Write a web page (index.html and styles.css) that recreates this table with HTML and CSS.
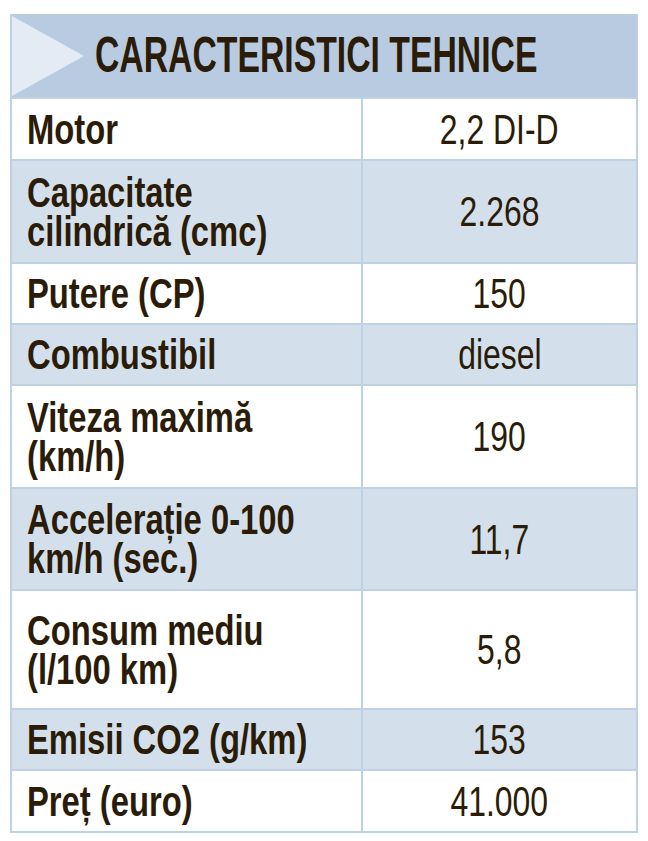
FILE: index.html
```html
<!DOCTYPE html>
<html lang="ro">
<head>
<meta charset="utf-8">
<title>Caracteristici tehnice</title>
<link rel="stylesheet" href="styles.css">
</head>
<body>
<div class="specs">
  <div class="head">
    <svg class="arrow" width="72" height="83" viewBox="0 0 72 83"><polygon points="0,2 72,42 0,82" fill="#e3ebf5"/></svg>
    <span class="head-text">CARACTERISTICI TEHNICE</span>
  </div>

  <div class="cell label"><span class="lt">Motor</span></div>
  <div class="cell value"><span class="vt">2,2 DI-D</span></div>

  <div class="cell label alt"><span class="lt">Capacitate<br>cilindrică (cmc)</span></div>
  <div class="cell value alt"><span class="vt">2.268</span></div>

  <div class="cell label"><span class="lt">Putere (CP)</span></div>
  <div class="cell value"><span class="vt">150</span></div>

  <div class="cell label alt"><span class="lt">Combustibil</span></div>
  <div class="cell value alt"><span class="vt">diesel</span></div>

  <div class="cell label"><span class="lt">Viteza maximă<br>(km/h)</span></div>
  <div class="cell value"><span class="vt">190</span></div>

  <div class="cell label alt"><span class="lt">Accelerație 0-100<br>km/h (sec.)</span></div>
  <div class="cell value alt"><span class="vt">11,7</span></div>

  <div class="cell label"><span class="lt">Consum mediu<br>(l/100 km)</span></div>
  <div class="cell value"><span class="vt">5,8</span></div>

  <div class="cell label alt"><span class="lt">Emisii CO2 (g/km)</span></div>
  <div class="cell value alt"><span class="vt">153</span></div>

  <div class="cell label"><span class="lt">Preț (euro)</span></div>
  <div class="cell value"><span class="vt">41.000</span></div>
</div>
</body>
</html>
```
FILE: styles.css
```css
html, body {
  margin: 0;
  padding: 0;
  background: #ffffff;
}

body {
  font-family: "Liberation Sans", Arial, sans-serif;
  color: #2a1c08;
}

.specs {
  margin: 14px 0 0 10px;
  width: 628px;
  box-sizing: border-box;
  padding: 0 2px 2px 2px;
  background: #bfd1e4;
  display: grid;
  grid-template-columns: 349px 1fr;
  grid-template-rows: 83px 60px 101px 59px 59px 101px 100px 117px 59px 60px;
  gap: 2px;
}

.head {
  grid-column: 1 / 3;
  background: #b8cbe0;
  display: flex;
  align-items: center;
  position: relative;
  overflow: hidden;
}

.arrow {
  position: absolute;
  left: 0;
  top: 0;
}

.head-text {
  display: inline-block;
  margin-left: 83px;
  font-weight: bold;
  font-size: 50px;
  line-height: 50px;
  white-space: nowrap;
  transform: scaleX(0.675);
  transform-origin: left center;
  position: relative;
  top: -1px;
}

.cell {
  background: #ffffff;
  display: flex;
  align-items: center;
}

.cell.alt {
  background: #d3e0ec;
}

.label {
  padding-left: 15px;
}

.value {
  justify-content: center;
}

.lt {
  display: inline-block;
  font-weight: bold;
  font-size: 42px;
  line-height: 39px;
  white-space: nowrap;
  transform: scaleX(0.78);
  transform-origin: left center;
}

.vt {
  display: inline-block;
  font-size: 42px;
  line-height: 39px;
  white-space: nowrap;
  transform: scaleX(0.76);
  transform-origin: center center;
}
```
